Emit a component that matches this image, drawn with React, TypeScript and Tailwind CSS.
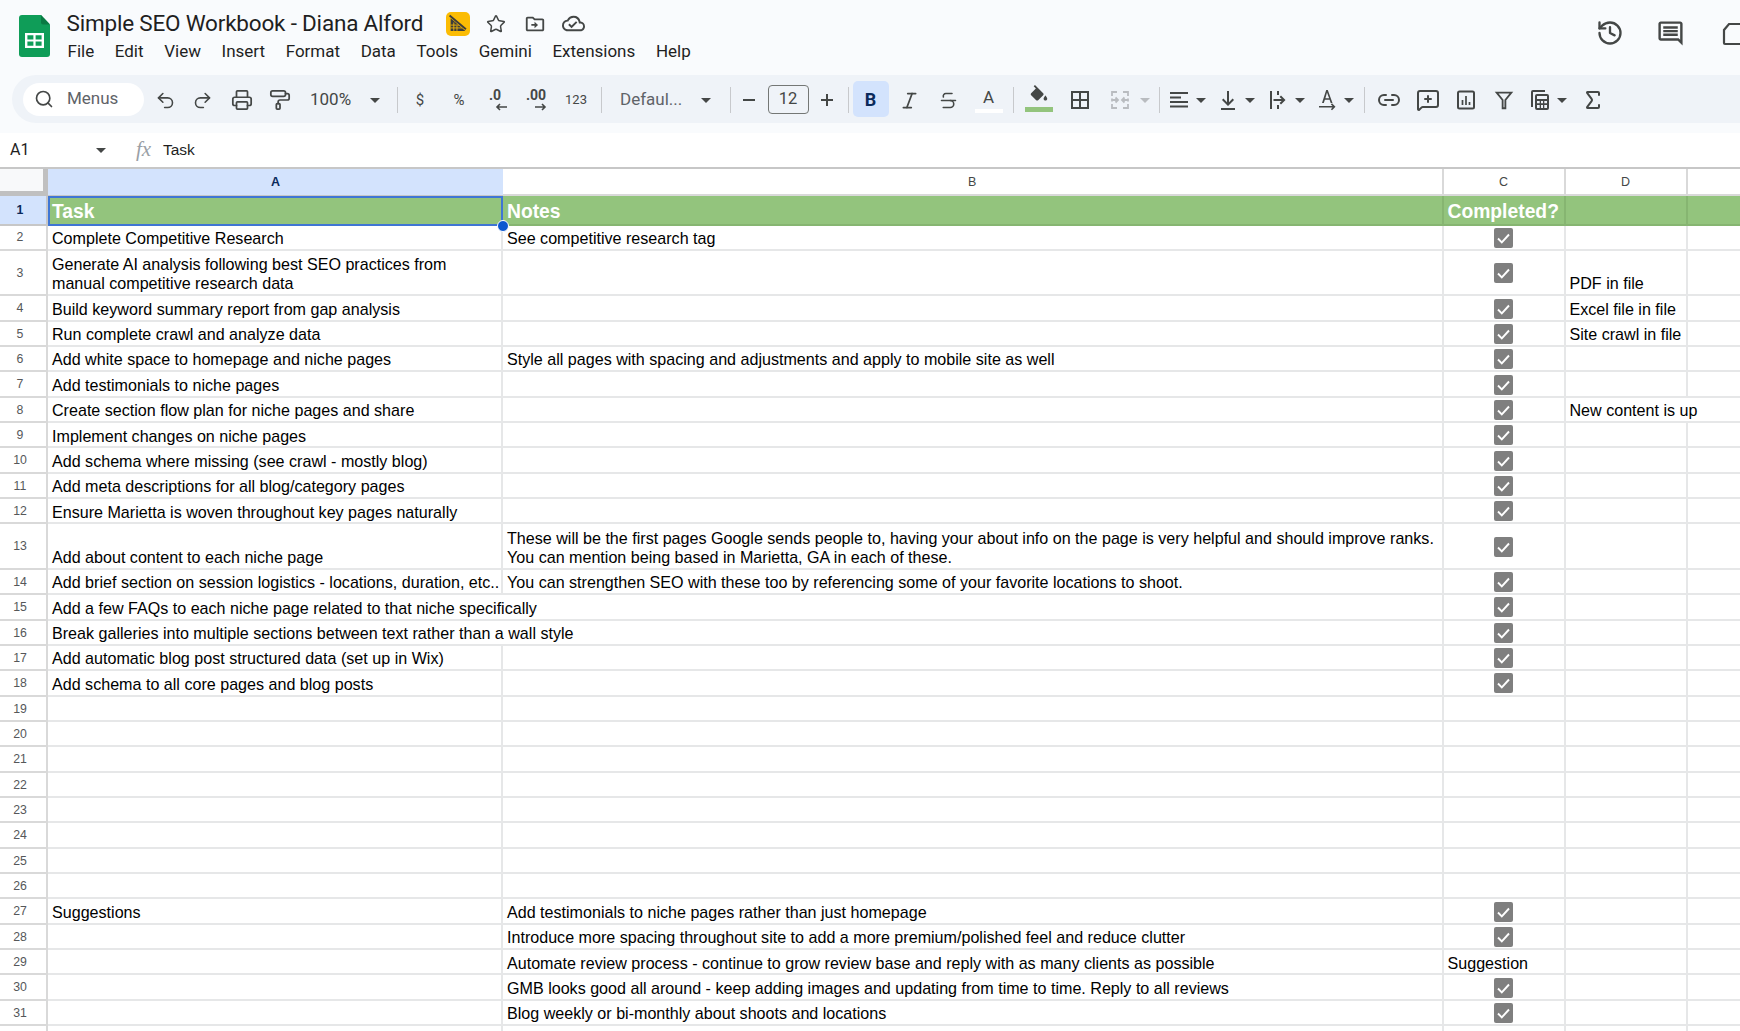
import { History, Italic, Link2, MessageSquarePlus, PaintRoller, Printer, Redo2, Search, Sigma, Star, Strikethrough, Undo2 } from 'lucide-react';

type Row = { n: number; a?: string; b?: string; c?: string; d?: string; tall?: boolean; flowA?: boolean; flowD?: boolean };

const rows: Row[] = [
    { n: 2, a: 'Complete Competitive Research', b: 'See competitive research tag', c: 'x' },
    { n: 3, a: 'Generate AI analysis following best SEO practices from\nmanual competitive research data', c: 'x', d: 'PDF in file', tall: true },
    { n: 4, a: 'Build keyword summary report from gap analysis', c: 'x', d: 'Excel file in file' },
    { n: 5, a: 'Run complete crawl and analyze data', c: 'x', d: 'Site crawl in file' },
    { n: 6, a: 'Add white space to homepage and niche pages', b: 'Style all pages with spacing and adjustments and apply to mobile site as well', c: 'x' },
    { n: 7, a: 'Add testimonials to niche pages', c: 'x' },
    { n: 8, a: 'Create section flow plan for niche pages and share', c: 'x', d: 'New content is up', flowD: true },
    { n: 9, a: 'Implement changes on niche pages', c: 'x' },
    { n: 10, a: 'Add schema where missing (see crawl - mostly blog)', c: 'x' },
    { n: 11, a: 'Add meta descriptions for all blog/category pages', c: 'x' },
    { n: 12, a: 'Ensure Marietta is woven throughout key pages naturally', c: 'x' },
    { n: 13, a: 'Add about content to each niche page', b: 'These will be the first pages Google sends people to, having your about info on the page is very helpful and should improve ranks.\nYou can mention being based in Marietta, GA in each of these.', c: 'x', tall: true },
    { n: 14, a: 'Add brief section on session logistics - locations, duration, etc..', b: 'You can strengthen SEO with these too by referencing some of your favorite locations to shoot.', c: 'x' },
    { n: 15, a: 'Add a few FAQs to each niche page related to that niche specifically', c: 'x', flowA: true },
    { n: 16, a: 'Break galleries into multiple sections between text rather than a wall style', c: 'x', flowA: true },
    { n: 17, a: 'Add automatic blog post structured data (set up in Wix)', c: 'x' },
    { n: 18, a: 'Add schema to all core pages and blog posts', c: 'x' },
    { n: 19 }, { n: 20 }, { n: 21 }, { n: 22 }, { n: 23 }, { n: 24 }, { n: 25 }, { n: 26 },
    { n: 27, a: 'Suggestions', b: 'Add testimonials to niche pages rather than just homepage', c: 'x' },
    { n: 28, b: 'Introduce more spacing throughout site to add a more premium/polished feel and reduce clutter', c: 'x' },
    { n: 29, b: 'Automate review process - continue to grow review base and reply with as many clients as possible', c: 'Suggestion' },
    { n: 30, b: 'GMB looks good all around - keep adding images and updating from time to time. Reply to all reviews', c: 'x' },
    { n: 31, b: 'Blog weekly or bi-monthly about shoots and locations', c: 'x' },
];

const menus = ['File', 'Edit', 'View', 'Insert', 'Format', 'Data', 'Tools', 'Gemini', 'Extensions', 'Help'];

const Caret = ({ className = '', light = false }: { className?: string; light?: boolean }) => (
    <svg viewBox="0 0 10 5" className={`w-[10px] h-[5px] shrink-0 ${className}`}>
        <path d="M0 0h10L5 5z" fill={light ? '#b9bcc0' : '#444746'} />
    </svg>
);

const Sep = ({ className = '' }: { className?: string }) => <div className={`w-px h-[26px] bg-[#c7c9cc] shrink-0 ${className}`} />;

const Ico = ({ d, className = '' }: { d: string; className?: string }) => (
    <svg viewBox="0 0 24 24" className={`w-6 h-6 shrink-0 ${className}`} fill="#444746">
        <path d={d} />
    </svg>
);

const Check = () => (
    <div className="w-[19px] h-[20px] rounded-[2px] bg-[#7f7f7f] flex items-center justify-center">
        <svg viewBox="0 0 19 20" className="w-[19px] h-[20px]" fill="none" stroke="white" strokeWidth="1.9">
            <path d="M4 10.5l3.8 3.8L15 6.5" />
        </svg>
    </div>
);

const Toolbar = () => (
    <div className="h-[48px] ml-3 pl-[11px] pt-[2px] rounded-l-[24px] bg-[#eff3f8] flex items-center text-[#444746]">
        <div className="w-[120.5px] h-[33px] -mt-[2px] rounded-full bg-white flex items-center shrink-0 pl-[11px]">
            <Search className="w-5 h-5" strokeWidth={2} />
            <span className="ml-[13px] text-[17px] text-[#5f6368]">Menus</span>
        </div>
        <Undo2 className="w-[21px] h-[21px] ml-[11px] shrink-0" strokeWidth={1.8} />
        <Redo2 className="w-[21px] h-[21px] ml-[16px] shrink-0" strokeWidth={1.8} />
        <Printer className="w-[22px] h-[22px] ml-[18px] shrink-0" strokeWidth={1.9} />
        <PaintRoller className="w-[22px] h-[22px] ml-[16px] shrink-0" strokeWidth={1.9} />
        <span className="ml-[19.5px] w-[44px] text-[17px] text-[#444746] shrink-0">100%</span>
        <Caret className="ml-[16px]" />
        <Sep className="ml-[17px]" />
        <span className="ml-[10px] w-6 text-center text-[15px] shrink-0">$</span>
        <span className="ml-[15px] w-6 text-center text-[15px] shrink-0">%</span>
        <div className="ml-[12px] w-6 h-6 shrink-0 relative text-[14px] font-bold leading-[15px] text-center">
            .0
            <svg viewBox="0 0 12 8" className="absolute left-[12px] top-[15px] w-[12px] h-[8px]" fill="none" stroke="#444746" strokeWidth="1.6"><path d="M12 4H2M5 1L2 4l3 3" /></svg>
        </div>
        <div className="ml-[17px] w-6 h-6 shrink-0 relative text-[14px] font-bold leading-[15px] text-center whitespace-nowrap">
            .00
            <svg viewBox="0 0 12 8" className="absolute left-[11px] top-[15px] w-[12px] h-[8px]" fill="none" stroke="#444746" strokeWidth="1.6"><path d="M0 4h10M7 1l3 3-3 3" /></svg>
        </div>
        <span className="ml-[16px] w-6 text-center text-[13px] shrink-0">123</span>
        <Sep className="ml-[13px]" />
        <span className="ml-[18px] w-[64px] text-[17px] text-[#5f6368] shrink-0">Defaul...</span>
        <Caret className="ml-[16.5px]" />
        <Sep className="ml-[19px]" />
        <svg viewBox="0 0 24 24" className="ml-[6px] w-6 h-6 shrink-0" fill="#444746"><path d="M6 11h12v2H6z" /></svg>
        <div className="ml-[7px] w-[41px] h-[29px] -mt-[2px] rounded-[4px] border border-[#747775] flex items-center justify-center text-[16.5px] shrink-0">12</div>
        <svg viewBox="0 0 24 24" className="ml-[6px] w-6 h-6 shrink-0" fill="#444746"><path d="M11 6h2v5h5v2h-5v5h-2v-5H6v-2h5z" /></svg>
        <Sep className="ml-[9px]" />
        <div className="ml-1 w-9 h-9 -mt-[2px] rounded-[5px] bg-[#d3e3fd] flex items-center justify-center text-[18px] font-bold text-[#0b2a5b] shrink-0">B</div>
        <Italic className="w-[21px] h-[21px] ml-[10px] shrink-0" strokeWidth={2} />
        <Strikethrough className="w-[21px] h-[21px] ml-[18px] shrink-0" strokeWidth={1.8} />
        <div className="ml-[18px] w-6 h-[30px] flex flex-col items-center shrink-0">
            <span className="text-[17px] leading-[24px]">A</span>
            <div className="w-[28px] h-[4px] bg-white shrink-0" />
        </div>
        <Sep className="ml-[12px]" />
        <div className="ml-[13px] w-6 h-[30px] flex flex-col items-center shrink-0">
            <svg viewBox="0 0 24 24" className="w-[22px] h-[22px] shrink-0" fill="#444746">
                <path d="M16.56 8.94L7.62 0 6.21 1.41l2.38 2.38-5.15 5.15c-.59.59-.59 1.54 0 2.12l5.5 5.5c.29.29.68.44 1.06.44s.77-.15 1.06-.44l5.5-5.5c.59-.58.59-1.53 0-2.12zM19 11.5s-2 2.17-2 3.5c0 1.1.9 2 2 2s2-.9 2-2c0-1.33-2-3.5-2-3.5z" />
            </svg>
            <div className="w-[28px] h-[5px] bg-[#93c47d] shrink-0" />
        </div>
        <svg viewBox="0 0 24 24" className="ml-[17px] w-6 h-6 shrink-0" fill="none" stroke="#444746" strokeWidth="2"><path d="M4 4h16v16H4zM12 4v16M4 12h16" /></svg>
        <svg viewBox="0 0 24 24" className="ml-[16px] w-6 h-6 shrink-0" fill="none" stroke="#b9bcc0" strokeWidth="1.8"><path d="M9 4H4v4M4 10.5v3M4 16v4h5M15 4h5v4M20 10.5v3M20 16v4h-5M4 12h6M7.5 9.5L10 12l-2.5 2.5M20 12h-6M16.5 9.5L14 12l2.5 2.5" /></svg>
        <Caret light className="ml-[8.5px]" />
        <Sep className="ml-[8.5px]" />
        <Ico className="ml-[7.5px]" d="M3 4h18v2H3zM3 8.5h11v2H3zM3 13h18v2H3zM3 17.5h18v2H3z" />
        <Caret className="ml-[5px]" />
        <Ico className="ml-[10px]" d="M11 3h2v11.2l3.6-3.6L18 12l-6 6-6-6 1.4-1.4 3.6 3.6zM5 20h14v2H5z" />
        <Caret className="ml-[5px]" />
        <Ico className="ml-[10.5px]" d="M4 3h2v18H4zM11 3h2v4h-2zM11 17h2v4h-2zM7.5 11h8.200l-2.100-2.100L15 7.500l4.500 4.500-4.500 4.500-1.400-1.400 2.100-2.100H7.500z" />
        <Caret className="ml-[5px]" />
        <svg viewBox="0 0 24 24" className="ml-[10.5px] w-6 h-6 shrink-0" fill="#444746">
            <path d="M11.200 2h1.600l4.700 13h-1.800l-1.100-3.200h-4.700L8.800 15H7zM10.400 10.200h3.700L12 4.600zM4 18h13.500l-1.600-1.600 1.100-1.100 3.500 3.500-3.500 3.500-1.100-1.100 1.600-1.600H4z" />
        </svg>
        <Caret className="ml-[5px]" />
        <Sep className="ml-[10px]" />
        <Link2 className="w-6 h-6 ml-[11.5px] shrink-0" strokeWidth={2} />
        <MessageSquarePlus className="w-6 h-6 ml-[15px] shrink-0" strokeWidth={2} />
        <svg viewBox="0 0 24 24" className="ml-[14.5px] w-6 h-6 shrink-0" fill="none" stroke="#444746" strokeWidth="2"><rect x="4" y="3.500" width="16" height="17" rx="1.500" /><path d="M8.500 12v5M12 8v9M15.500 14v3" strokeWidth="1.700" /></svg>
        <svg viewBox="0 0 24 24" className="ml-[15px] w-[22px] h-[22px] shrink-0" fill="none" stroke="#444746" strokeWidth="2"><path d="M4 4h16l-6.500 8v9h-3v-9z" /></svg>
        <svg viewBox="0 0 24 24" className="ml-[13px] w-6 h-6 shrink-0" fill="#444746">
            <path d="M5 2h12v2H5v15H3V4a2 2 0 0 1 2-2zM9 6h10a2 2 0 0 1 2 2v12a2 2 0 0 1-2 2H9a2 2 0 0 1-2-2V8a2 2 0 0 1 2-2zm0 2v3h10V8zm0 5v2.200h2.700V13zm4 0v2.200h2V13zm3.300 0v2.200H19V13zM9 17v3h2.700v-3zm4 0v3h2v-3zm3.300 0v3H19v-3z" />
        </svg>
        <Caret className="ml-[5px]" />
        <Sigma className="w-6 h-6 ml-[14px] shrink-0" strokeWidth={2} />
    </div>
);

const Header = () => (
    <div className="h-[75px] flex text-[#1f1f1f]">
        <svg viewBox="0 0 31 42" className="ml-[18.500px] mt-[15px] w-[31px] h-[42px] shrink-0">
            <path d="M3 0h19l9 9.500V39a3 3 0 0 1-3 3H3a3 3 0 0 1-3-3V3a3 3 0 0 1 3-3z" fill="#0f9d58" />
            <path d="M22 0l9 9.500h-7a2 2 0 0 1-2-2z" fill="#0a7a43" />
            <path d="M6 18h19v15H6zM8.400 20.200v4.200h6v-4.200zm8.200 0v4.200h6v-4.200zm-8.200 6.400v4.200h6v-4.200zm8.200 0v4.200h6v-4.200z" fill="white" fillRule="evenodd" />
        </svg>
        <div className="ml-[17px] flex-1 min-w-0">
            <div className="h-[37px] pt-[10px] flex items-center">
                <span className="text-[22.500px] tracking-[-0.2px] leading-none whitespace-nowrap w-[358px] shrink-0">Simple SEO Workbook - Diana Alford</span>
                <div className="ml-[21px] w-[24px] h-[24px] rounded-[5px] bg-[#fbbc04] flex items-center justify-center shrink-0">
                    <svg viewBox="0 0 18 18" className="w-[19px] h-[19px]">
                        <path d="M2.500 4v12h14z" fill="#3c3c3c" />
                        <path d="M2.500 10.500h8M2.500 13.200h11M5.500 8v8M8.500 11v5" stroke="#fbbc04" strokeWidth="0.8" fill="none" />
                        <path d="M1.500 1.500l15.500 13" stroke="#3c3c3c" strokeWidth="1.800" fill="none" />
                    </svg>
                </div>
                <Star className="ml-[16px] w-[20px] h-[20px] shrink-0" strokeWidth={1.800} color="#444746" />
                <svg viewBox="0 0 24 24" className="ml-[18px] w-[22px] h-[22px] shrink-0" fill="#444746">
                    <path d="M20 6h-8l-2-2H4c-1.100 0-2 .9-2 2v12c0 1.100.9 2 2 2h16c1.100 0 2-.9 2-2V8c0-1.100-.9-2-2-2zm0 12H4V6h5.170l2 2H20v10zm-8.500-1.500L15.300 13l-3.800-3.500V12H8v2h3.500z" />
                </svg>
                <svg viewBox="0 0 24 24" className="ml-[16px] w-[23px] h-[23px] shrink-0" fill="#444746">
                    <path d="M19.350 10.040A7.490 7.490 0 0 0 12 4C9.110 4 6.600 5.640 5.350 8.040A5.994 5.994 0 0 0 0 14c0 3.310 2.690 6 6 6h13c2.760 0 5-2.240 5-5 0-2.640-2.050-4.780-4.650-4.960zM19 18H6c-2.210 0-4-1.790-4-4 0-2.050 1.530-3.760 3.560-3.970l1.070-.11.5-.95A5.469 5.469 0 0 1 12 6c2.620 0 4.880 1.860 5.390 4.430l.3 1.500 1.530.11A2.980 2.980 0 0 1 22 15c0 1.650-1.350 3-3 3zm-9-3.820l-2.090-2.090L6.500 13.500 10 17l6.010-6.010-1.410-1.410z" />
                </svg>
            </div>
            <div className="mt-[3px] ml-[1px] flex gap-[20.600px] text-[17px] leading-[22px] text-[#1f1f1f]">
                {menus.map((m) => <span key={m}>{m}</span>)}
            </div>
        </div>
        <div className="w-[144px] shrink-0 flex items-start pt-[19px] overflow-hidden">
            <History className="w-[28px] h-[28px] shrink-0" strokeWidth={2} color="#444746" />
            <svg viewBox="0 0 24 24" className="ml-[32px] w-[29px] h-[29px] shrink-0" fill="#444746">
                <path d="M22 4c0-1.100-.9-2-2-2H4c-1.100 0-2 .9-2 2v12c0 1.100.9 2 2 2h14l4 4V4zm-2 0v13.170L18.830 16H4V4h16zM6 12h12v2H6zm0-3h12v2H6zm0-3h12v2H6z" />
            </svg>
            <svg viewBox="0 0 24 24" className="ml-[37px] mt-[3px] w-[24px] h-[24px] shrink-0" fill="none" stroke="#444746" strokeWidth="2.200">
                <path d="M7 2h20v20H3a1 1 0 0 1-1-1V8z" />
            </svg>
        </div>
    </div>
);

const FormulaBar = () => (
    <div className="h-[34px] flex items-center text-[#1f1f1f]">
        <span className="ml-[10px] w-[86px] text-[16px]">A1</span>
        <Caret />
        <span className="ml-[30px] w-[27px] text-[21px] italic text-[#9aa0a6] font-['Liberation_Serif',serif]">fx</span>
        <span className="text-[15.500px] font-['Liberation_Sans',sans-serif]">Task</span>
    </div>
);

const ColumnHeader = () => (
    <div className="h-[29px] flex border-t-2 border-[#c7c7c7] text-[12.500px] text-[#444746] font-['Liberation_Sans',sans-serif]">
        <div className="w-[48px] shrink-0 bg-[#f8f9fa] border-r-[5px] border-b-[5px] border-[#c0c0c0]" />
        <div className="w-[455px] shrink-0 bg-[#d3e3fd] border-b border-[#c7c7c7] pt-[1px] flex items-center justify-center font-bold text-[#0b2a5b]">A</div>
        <div className="w-[940.5px] shrink-0 border-b-2 border-r-2 border-[#d9d9d9] pt-[1px] flex items-center justify-center">B</div>
        <div className="w-[122px] shrink-0 border-b-2 border-r-2 border-[#d9d9d9] pt-[1px] flex items-center justify-center">C</div>
        <div className="w-[122px] shrink-0 border-b-2 border-r-2 border-[#d9d9d9] pt-[1px] flex items-center justify-center">D</div>
        <div className="flex-1 border-b-2 border-[#d9d9d9]" />
    </div>
);

const GreenRow = () => (
    <div className="h-[29.500px] flex text-[19.300px] leading-[31px] font-bold text-white font-['Liberation_Sans',sans-serif]">
        <div className="w-[48px] shrink-0 bg-[#d3e3fd] border-r-2 border-b-2 border-[#c7c7c7] pr-[6px] pt-[2px] flex items-center justify-center text-[12.300px] font-bold text-[#0b2a5b]">1</div>
        <div className="relative w-[455px] shrink-0 bg-[#93c47d] pl-[4px] outline-[2.500px] outline-[#3f76d4] -outline-offset-[2.500px]">
            Task
            <div className="absolute -right-[6px] -bottom-[6px] w-[12px] h-[12px] rounded-full bg-[#0b57d0] border border-white z-10" />
        </div>
        <div className="w-[940.5px] shrink-0 bg-[#93c47d] pl-[4px] border-r-2 border-b-2 border-[#86b571]">Notes</div>
        <div className="w-[122px] shrink-0 bg-[#93c47d] pl-[4px] border-r-2 border-b-2 border-[#86b571] whitespace-nowrap">Completed?</div>
        <div className="w-[122px] shrink-0 bg-[#93c47d] border-r-2 border-b-2 border-[#86b571]" />
        <div className="flex-1 bg-[#93c47d] border-b-2 border-[#86b571]" />
    </div>
);

const SheetRow = ({ row }: { row: Row }) => {
    const cell = 'shrink-0 px-[4px] pb-[0.5px] border-b-2 border-[#e6e7e8] flex items-end whitespace-pre';
    return (
        <div className={`flex text-[16.100px] leading-[19.400px] text-black ${row.tall ? 'h-[45.500px]' : 'h-[25.350px]'}`}>
            <div className="w-[48px] shrink-0 border-r-2 border-b-2 border-[#d9d9d9] pr-[6px] pt-[2px] flex items-center justify-center text-[12.300px] text-[#555759]">{row.n}</div>
            <div className={`w-[455px] ${cell} ${row.flowA ? '' : 'border-r-2'}`}>{row.a}</div>
            <div className={`w-[940.5px] ${cell} border-r-2`}>{row.b}</div>
            {row.c === 'x' ? (
                <div className="w-[122px] shrink-0 border-b-2 border-r-2 border-[#e6e7e8] pt-[1px] flex items-center justify-center">
                    <Check />
                </div>
            ) : (
                <div className={`w-[122px] ${cell} border-r-2`}>{row.c}</div>
            )}
            <div className={`w-[122px] ${cell} ${row.flowD ? '' : 'border-r-2'}`}>{row.d}</div>
            <div className="flex-1 border-b-2 border-[#e6e7e8]" />
        </div>
    );
};

export default function App() {
    return (
        <div className="w-[1740px] h-[1031px] overflow-hidden bg-white font-['Roboto',sans-serif]">
            <div className="h-[133px] bg-[#f9fbfd]">
                <Header />
                <Toolbar />
            </div>
            <FormulaBar />
            <ColumnHeader />
            <GreenRow />
            <div className="font-['Liberation_Sans',sans-serif]">
                {rows.map((row) => <SheetRow key={row.n} row={row} />)}
                <div className="h-[6px] flex">
                    <div className="w-[48px] shrink-0 border-r-2 border-[#d9d9d9]" />
                    <div className="w-[455px] shrink-0 border-r-2 border-[#e6e7e8]" />
                    <div className="w-[940.5px] shrink-0 border-r-2 border-[#e6e7e8]" />
                    <div className="w-[122px] shrink-0 border-r-2 border-[#e6e7e8]" />
                    <div className="w-[122px] shrink-0 border-r-2 border-[#e6e7e8]" />
                </div>
            </div>
        </div>
    );
}
